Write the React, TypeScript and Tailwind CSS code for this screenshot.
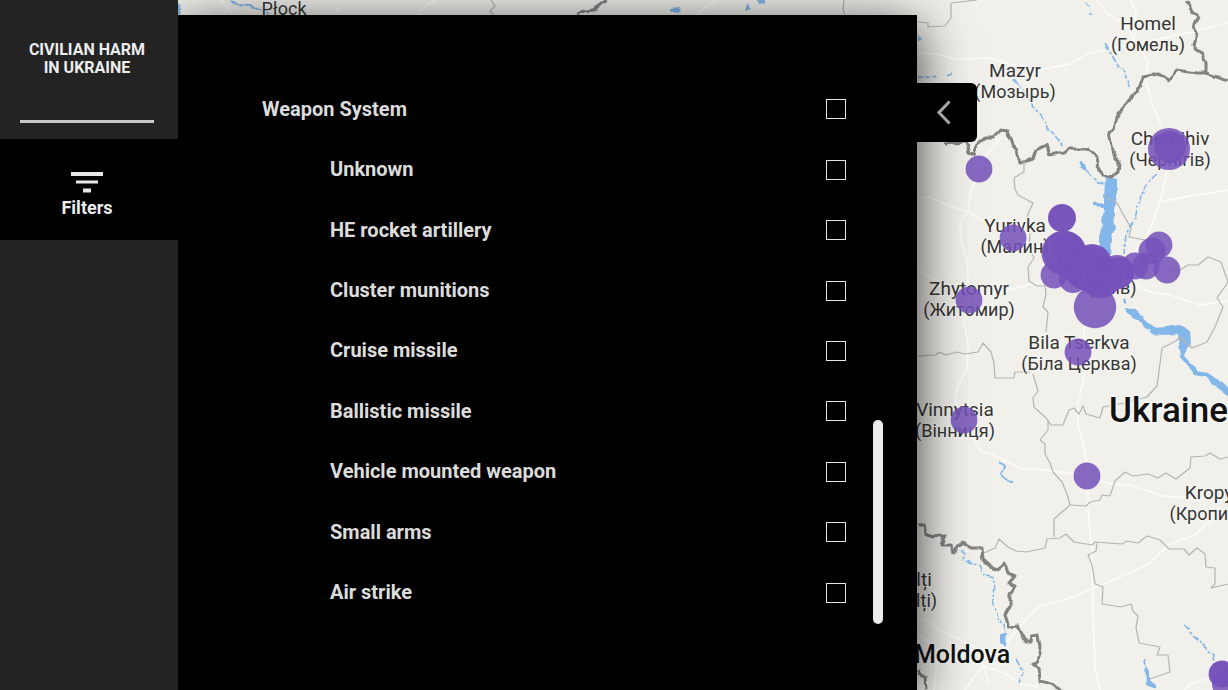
import React from "react";

// ============================================================================
// Data
// ============================================================================

const WEAPONS = [
  "Unknown",
  "HE rocket artillery",
  "Cluster munitions",
  "Cruise missile",
  "Ballistic missile",
  "Vehicle mounted weapon",
  "Small arms",
  "Air strike",
];

/** Incident markers: cx, cy, r */
const INCIDENTS: [number, number, number][] = [
  [979, 169, 13.4], [1169, 149, 21], [1170, 147, 16],
  [1062, 218, 14], [1062, 218, 13.4], [1013, 238, 13.4], [969, 300, 13.4],
  [1064, 253, 22.5], [1064, 252, 21], [1069, 249, 16], [1076, 262, 18],
  [1092, 264, 20], [1092, 264, 19], [1084, 268, 20], [1090, 274, 18],
  [1054, 275, 13.4], [1073, 279, 14], [1085, 270, 20], [1101, 277, 21],
  [1101, 277, 20], [1117, 272, 17], [1118, 273, 16], [1095, 307, 21.2],
  [1135, 266, 13.4], [1146, 266, 13.4], [1152, 251, 13.4], [1159, 245, 13.4],
  [1167, 270, 13.4], [1078, 352, 13.4], [964, 420, 13.4], [1087, 476, 13.4],
  [1222, 674, 13.4], [1222, 674, 13], [1227, 684, 15],
];

/** City labels: x, first baseline, latin name, local name */
const CITIES: [number, number, string, string][] = [
  [1148, 30, "Homel", "(Гомель)"],
  [1015, 77, "Mazyr", "(Мозырь)"],
  [1170, 145, "Chernihiv", "(Чернігів)"],
  [1015, 232, "Yurivka", "(Малин)"],
  [1112, 273, "Kyiv", "(Київ)"],
  [969, 295, "Zhytomyr", "(Житомир)"],
  [1079, 349, "Bila Tserkva", "(Біла Церква)"],
  [955, 416, "Vinnytsia", "(Вінниця)"],
  [1243, 499, "Kropyvnytskyi", "(Кропивницький)"],
  [913, 586, "Bălți", "(Bălți)"],
];

const ROADS = [
  "M918 53 L938 54 954 59 990 58 1003 62 1035 71 1070 64 1090 53 1120 47 1165 38 1195 31 1215 26 1228 22",
  "M1096 0 L1108 14 1128 27 1136 43 1148 61 1146 82 1153 106 1163 130 1168 149 1166 178 1160 202 1148 235 1120 270",
  "M1131 0 L1136 12 1134 38",
  "M918 199 L930 197 950 206 969 212 985 222 1013 238 1045 248 1080 265",
  "M1003 136 L990 150 979 169 970 195 968 212 960 222 961 240 967 260 969 300 964 322 968 344 967 368 957 388 955 400 964 420",
  "M918 271 L940 281 969 296 1000 292 1040 282 1070 276",
  "M1160 202 L1190 196 1228 190",
  "M1125 280 L1150 292 1170 295 1200 305 1228 301",
  "M1095 307 L1084 330 1085 358 1084 378 1078 403 1078 426 1084 447 1088 470 1088 510 1092 550 1093 610 1095 668 1100 690",
  "M964 420 L980 450 1000 458 1020 468 1052 471 1087 476 1110 484 1130 485 1163 496 1228 501",
  "M1228 510 L1205 525 1195 535 1168 545 1150 563 1120 577 1070 598 1040 606 1030 615 1010 638 1001 660",
  "M918 618 L930 623 940 631 955 637 975 647 983 666 1005 673 1020 684 1038 687",
  "M983 666 L975 676 965 690 M983 666 L990 684 M918 634 L938 650 934 690",
  "M1185 690 L1190 684 1222 674",
  "M221 0 L232 15 M335 7 L338 12 M435 0 L420 10 418 15 M717 0 L704 8 698 15",
];

const REGIONS = [
  "M918 22 L928 23 928 27 945 26 951 18 951 3 960 2 977 0",
  "M491 0 L495 6 490 11 494 15 M844 0 L843 9 845 15",
  "M1024 160 L1024 172 1014 178 1015 189 1018 195 1033 203 1028 214 1026 222 1030 234 1029 247 1034 258 1028 267 1029 281 1037 286 1045 286 1046 294 1043 307 1048 312 1046 332",
  "M1033 374 L1038 391 1033 398 1034 407 1046 418 1051 425 1063 425 1069 410 1074 408 1079 414 1083 406 1086 414 1100 418 1103 407 1125 403 1147 397 1157 386 1160 364 1162 348 1176 341 1180 337",
  "M918 356 L936 355 939 352 946 355 957 352 965 354 978 352 983 343 991 352 994 363 995 378 1014 378 1015 372 1030 372",
  "M1048 420 L1048 430 1040 440 1045 444 1045 454 1050 463 1053 472 1062 482 1067 494 1070 505 1054 519 1054 537",
  "M1070 505 L1086 506 1090 502 1100 500 1102 495 1110 496 1115 481 1125 472 1133 476 1148 474 1158 478 1166 473 1176 479 1190 468 1191 457 1205 456 1210 453 1220 459 1228 457",
  "M984 553 L995 548 999 539 1008 547 1016 551 1026 552 1045 548 1047 539 1060 538 1066 534 1074 542 1092 545 1095 542 1122 544 1127 541 1138 543 1147 536 1160 540 1169 549 1184 549 1189 555 1197 548 1205 554 1206 567 1215 568 1215 584 1211 588 1228 584",
  "M1097 543 L1096 551 1088 555 1092 565 1095 584 1103 587 1102 604 1121 607 1131 604 1133 611 1138 616 1136 627 1139 643 1160 647 1157 655 1168 655 1170 672 1150 679",
  "M1106 197 L1117 203 1123 214 1131 228 1129 237 1145 240 1160 245",
  "M1168 270 L1180 270 1188 265 1198 265 1208 257 1221 262 1228 282 1217 298 1223 307 1215 327 1207 342 1192 348 1180 337",
];

const BORDERS = [
  "M577 15 L584 11 593 10 607 0",
  "M1187 0 L1192 12 1198 17 1194 24 1196 34 1193 46 1202 54 1206 63 1206 73 1228 81",
  "M1206 73 L1196 73 1177 70 1168 80 1158 74 1143 77 1138 91 1132 98 1122 108 1116 119 1113 127 1109 132 1112 146 1115 158 1119 162 1118 172 1110 178 1104 176 1096 165 1097 157 1087 149 1070 149 1065 152 1050 155 1047 145 1036 150 1033 159 1020 163 1017 150 1012 145 1007 131 1001 130 993 138 985 138 976 145 973 155 969 152 966 142 944 144",
  "M918 525 L924 525 926 534 933 537 945 535 941 545 950 545 955 553 957 545 963 542 972 548 982 548 983 560 990 566 999 569 1005 564 1008 573 1015 576 1009 583 1015 586 1010 594 1010 606 1005 615 1009 627 1018 626 1026 642 1031 642 1032 636 1038 635 1040 647 1037 662 1033 664 1039 669 1040 681 1051 684 1062 690",
  "M918 671 L925 678 926 690",
];

const RIVERS = [
  "M918 79 L927 76 937 77 M946 76 L952 74",
  "M1014 80 L1024 92 1032 106 1042 116 1047 128 1057 138 1064 147",
  "M1105 44 L1113 57 1118 66 1125 74 1130 88",
  "M1080 160 L1085 170 1098 183 1105 184",
  "M1157 174 L1146 184 1138 205 1135 219 1126 235 1124 253",
  "M960 549 L965 553 962 561 M966 561 L980 566 984 575 994 578 993 600 998 618 1003 625 1005 637",
  "M1016 659 L1023 672 1019 682",
  "M1184 625 L1195 638 1205 644 1206 650 1213 656 1214 665",
  "M1144 658 L1145 666",
];

// ============================================================================
// Map
// ============================================================================

function IncidentMap() {
  return (
    <svg
      viewBox="178 0 1050 690"
      preserveAspectRatio="xMaxYMid slice"
      className="absolute inset-0 h-full w-full bg-[#f1f0eb] font-[Roboto,'Noto_Sans',sans-serif]"
      role="img"
      aria-label="Map of incidents"
    >
      <defs>
        {/* Roughens the outlines of borders and water */}
        <filter id="rough" filterUnits="userSpaceOnUse" x="178" y="0" width="1050" height="690">
          <feTurbulence type="fractalNoise" baseFrequency="0.12" numOctaves="1" seed="4" />
          <feDisplacementMap in="SourceGraphic" scale="6" xChannelSelector="R" yChannelSelector="G" />
        </filter>
      </defs>

      <g fill="none" stroke="#fbfaf8" strokeWidth={1.8} strokeLinejoin="round">
        {ROADS.map((d) => <path key={d} d={d} />)}
      </g>

      {/* Reservoirs, lakes and rivers */}
      <g filter="url(#rough)">
        <g fill="#83b7ea">
          <path d="M1105 178 L1117 180 1117 196 1114 208 1115 228 1112 238 1111 256 1099 252 1099 238 1102 224 1104 207 1092 206 1092 203 1104 202 Z" />
          <path d="M1126 308 L1133 309 1143 317 1154 328 1166 327 1180 325 1190 331 1191 344 1184 356 1198 371 1208 373 1220 381 1230 387 1230 397 1213 385 1206 377 1194 375 1181 358 1179 344 1178 334 1163 335 1152 334 1142 323 1128 314 Z" />
          <path d="M1078 160 L1086 165 1088 173 1081 169 Z M1085 1 L1090 6 1087 6 Z M1091 12 L1093 15 1090 15 Z" />
          <path d="M918 33 L922 40 918 41 Z M178 3 L181 9 182 14 178 15 Z M669 8 L681 7 679 12 674 11 Z M747 4 L751 9 745 11 Z M757 0 L765 0 765 4 759 5 Z" />
          <path d="M1145 665 L1149 671 1149 679 1156 683 1156 690 1146 686 Z M1000 635 L1006 632 1005 646 1000 643 Z M1122 298 L1127 300 1125 303 Z" />
        </g>
        <g fill="none" stroke="#83b7ea" strokeWidth={1.6} strokeDasharray="7 2 3 2">
          {RIVERS.map((d) => <path key={d} d={d} />)}
        </g>
        <path d="M230 0 L237 5 250 6 262 11 270 15" fill="none" stroke="#83b7ea" strokeWidth={2} />
        <path d="M999 462 L1004 466 1001 474 1005 480 1012 481" fill="none" stroke="#83b7ea" strokeWidth={1.8} />
        <g fill="none" stroke="#828281" strokeWidth={3} strokeLinejoin="round">
          {BORDERS.map((d) => <path key={d} d={d} />)}
        </g>
      </g>
      <g fill="none" stroke="#b5b4b2" strokeWidth={1.2} strokeLinejoin="round">
        {REGIONS.map((d) => <path key={d} d={d} />)}
      </g>

      {/* Labels */}
      <g fill="#353535" stroke="#f6f5f2" strokeWidth={2.5} paintOrder="stroke" textAnchor="middle">
        <text x={284} y={15} className="text-[18px]">Płock</text>
        {CITIES.map(([x, y, name, local]) => (
          <React.Fragment key={name}>
            <text x={x} y={y} className="text-[19px]">{name}</text>
            <text x={x} y={y + 21} className="text-[18px]">{local}</text>
          </React.Fragment>
        ))}
      </g>
      <g fill="#111" stroke="#f8f7f4" strokeWidth={3} paintOrder="stroke" className="font-medium">
        <text x={1109} y={422} className="text-[35px]">Ukraine</text>
        <text x={914} y={663} className="text-[25px]">Moldova</text>
      </g>

      <g fill="#7552ba" fillOpacity={0.86}>
        {INCIDENTS.map(([cx, cy, r], i) => <circle key={i} cx={cx} cy={cy} r={r} />)}
      </g>
    </svg>
  );
}

// ============================================================================
// Sidebar
// ============================================================================

function Sidebar() {
  return (
    <nav className="flex w-[178px] shrink-0 flex-col bg-[#232323] text-[#ededed]">
      <header className="pt-[41px] pr-6 pb-4 pl-5">
        <h1 className="text-center text-[16px] leading-[18px] font-bold whitespace-nowrap">
          CIVILIAN HARM
          <br />
          IN UKRAINE
        </h1>
        <hr className="mt-[43px] border-t-3 border-[#c8c8c8]" />
      </header>
      <button type="button" className="flex flex-col items-center bg-black pt-8 pr-6 pb-[22px] pl-5">
        <svg width="32" height="22" viewBox="0 0 32 22" fill="#e8e8e8" aria-hidden="true">
          <path d="M0 1h32v4H0zM5 9.500h22v3H5zM12 17.500h8v4h-8z" />
        </svg>
        <span className="mt-[5px] text-[18px] leading-5 font-bold">Filters</span>
      </button>
    </nav>
  );
}

// ============================================================================
// Filter panel
// ============================================================================

/** A filter name with its tick box at the far end */
function FilterRow({ label, nested = false }: { label: string; nested?: boolean }) {
  return (
    <li className="flex flex-1 items-center">
      <label className={nested ? "flex flex-1 items-center justify-between pl-[68px]" : "flex flex-1 items-center justify-between"}>
        <span className="pb-px text-[20px] leading-6 font-bold text-[#dcdcdc]">{label}</span>
        <input type="checkbox" className="size-5 shrink-0 appearance-none border border-[#e4e4e4] checked:bg-[#e4e4e4]" />
      </label>
    </li>
  );
}

function FilterPanel() {
  return (
    <section
      aria-label="Filters"
      className="relative mt-[15px] mr-[311px] flex flex-1 bg-black pt-16 pr-[34px] pb-[66px] pl-[84px] shadow-[0_12px_50px_rgba(0,0,0,0.8)]"
    >
      <ul className="mb-px flex flex-1 flex-col">
        <FilterRow label="Weapon System" />
        {WEAPONS.map((name) => <FilterRow key={name} label={name} nested />)}
      </ul>
      <div className="ml-[27px] flex w-[10px] flex-col justify-end">
        <div className="h-[204px] rounded-full bg-[#ededed]" />
      </div>
      <button
        type="button"
        aria-label="Collapse filters"
        className="absolute top-[68px] left-full flex h-[59px] w-[60px] items-center justify-center rounded-r-md bg-black pr-2"
      >
        <svg width="16" height="26" viewBox="0 0 16 26" fill="none" stroke="#a8a8a8" strokeWidth="3" aria-hidden="true">
          <path d="M14.500 1.500 L4 12.500 14.500 23.500" />
        </svg>
      </button>
    </section>
  );
}

export default function App() {
  return (
    <div className="flex h-screen overflow-hidden bg-black font-[Roboto,sans-serif]">
      <Sidebar />
      <main className="relative flex flex-1 overflow-hidden">
        <IncidentMap />
        <FilterPanel />
      </main>
    </div>
  );
}
